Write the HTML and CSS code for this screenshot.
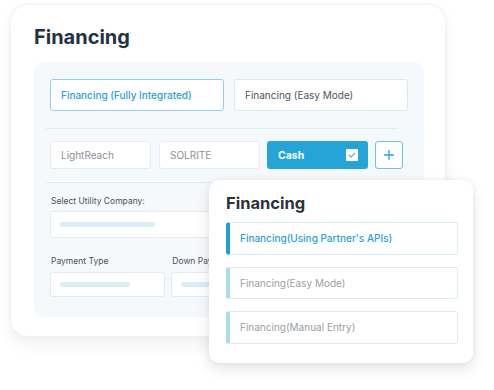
FILE: index.html
```html
<!DOCTYPE html>
<html>
<head>
<meta charset="utf-8">
<link rel="stylesheet" href="styles.css">
</head>
<body>
<div class="stage">
  <div class="card">
    <h1 class="title">Financing</h1>
    <div class="panel">
      <div class="row-modes">
        <div class="mode mode-active">Financing (Fully Integrated)</div>
        <div class="mode">Financing (Easy Mode)</div>
      </div>
      <div class="divider"></div>
      <div class="row-lenders">
        <div class="lender">LightReach</div>
        <div class="lender">SOLRITE</div>
        <div class="cash">
          <span>Cash</span>
          <span class="check">
            <svg width="12" height="12" viewBox="0 0 12 12"><path d="M3.2 6.2 L5.1 8 L8.8 4.2" fill="none" stroke="#5bb8e0" stroke-width="1.2" stroke-linecap="round" stroke-linejoin="round"/></svg>
          </span>
        </div>
        <div class="plus">
          <svg width="12" height="12" viewBox="0 0 12 12"><path d="M6 1.5 V10.5 M1.5 6 H10.5" stroke="#27a3d8" stroke-width="1.3" stroke-linecap="round"/></svg>
        </div>
      </div>
      <div class="divider divider-2"></div>
      <div class="label">Select Utility Company:</div>
      <div class="field field-wide"><span class="pill pill-long"></span></div>
      <div class="grid3">
        <div class="col">
          <div class="label label-low">Payment Type</div>
          <div class="field field-short"><span class="pill pill-mid"></span></div>
        </div>
        <div class="col">
          <div class="label label-low">Down Payment</div>
          <div class="field field-short"><span class="pill pill-mid"></span></div>
        </div>
        <div class="col">
          <div class="label label-low">Term</div>
          <div class="field field-short"><span class="pill pill-mid"></span></div>
        </div>
      </div>
    </div>
  </div>
  <div class="popup">
    <div class="popup-title">Financing</div>
    <div class="options">
      <div class="option option-active">Financing(Using Partner's APIs)</div>
      <div class="option">Financing(Easy Mode)</div>
      <div class="option">Financing(Manual Entry)</div>
    </div>
  </div>
</div>
</body>
</html>
```

FILE: styles.css
```css
* { box-sizing: border-box; }
html, body { margin: 0; padding: 0; background: #ffffff; }
body { font-family: Inter, "Noto Sans", sans-serif; width: 494px; height: 390px; overflow: hidden; }

.stage { position: relative; width: 494px; height: 390px; padding: 4px 0 0 10px; }

.card {
  width: 436px;
  height: 333px;
  background: #ffffff;
  border-radius: 18px;
  border: 1px solid #f1f3f5;
  box-shadow: 0 8px 14px rgba(40, 50, 60, 0.07), 0 0 4px rgba(40, 50, 60, 0.03);
  padding: 20px 21px 0 23px;
}

.title {
  margin: 0 0 13px 0;
  font-size: 20px;
  line-height: 24px;
  font-weight: 700;
  color: #1f3344;
}

.panel {
  background: #f6f9fc;
  border-radius: 9px;
  height: 255px;
  padding: 17px 16px 0 16px;
}

.row-modes { display: flex; gap: 10px; }
.mode {
  width: 174px;
  height: 32px;
  border: 1px solid #d5ebf3;
  border-radius: 3px;
  background: #ffffff;
  display: flex;
  align-items: center;
  padding-left: 10px;
  font-size: 10px;
  color: #4e555c;
}
.mode-active {
  border-color: #8fd2ec;
  color: #2aa2d8;
  font-weight: 500;
}

.divider { height: 1px; background: #dcecf3; margin: 17px 10px 12px -4px; }
.divider-2 { margin: 13px 10px 12px -4px; }

.row-lenders { display: flex; gap: 7px; align-items: flex-start; }
.lender {
  width: 101px;
  height: 28px;
  border: 1px solid #e8ebef;
  border-radius: 3px;
  background: #ffffff;
  display: flex;
  align-items: center;
  padding-left: 10px;
  font-size: 10px;
  color: #8b9097;
}
.lender + .lender { margin-left: 1px; }
.cash {
  width: 101px;
  height: 28px;
  border-radius: 3px;
  background: #23a5d8;
  display: flex;
  align-items: center;
  justify-content: space-between;
  padding: 0 10px 0 11px;
  font-size: 10.5px;
  font-weight: 700;
  color: #ffffff;
}
.check {
  width: 12px;
  height: 12px;
  background: #ffffff;
  border-radius: 1px;
  display: flex;
}
.plus {
  width: 28px;
  height: 28px;
  border: 1px solid #6cc2e6;
  border-radius: 3px;
  background: #ffffff;
  display: flex;
  align-items: center;
  justify-content: center;
}

.label {
  font-size: 8.5px;
  line-height: 12px;
  color: #4b5157;
  margin: 0 0 4px 1px;
}
.label-low { margin-bottom: 5px; }
.field {
  height: 27px;
  border: 1px solid #e6e9ee;
  border-radius: 3px;
  background: #ffffff;
  display: flex;
  align-items: center;
  padding-left: 9px;
}
.field-short { height: 25px; }
.pill { display: block; height: 5px; border-radius: 3px; background: #d8eff6; }
.pill-long { width: 95px; }
.pill-mid { width: 70px; }

.grid3 { display: grid; grid-template-columns: repeat(3, 1fr); gap: 6px; margin-top: 17px; }

.popup {
  position: absolute;
  left: 209px;
  top: 180px;
  width: 264px;
  height: 183px;
  background: #ffffff;
  border-radius: 10px;
  box-shadow: 0 6px 14px rgba(30, 40, 50, 0.12), 0 0 6px rgba(30, 40, 50, 0.05);
  padding: 13px 15px 0 17px;
}
.popup-title {
  font-size: 16.5px;
  line-height: 20px;
  font-weight: 700;
  color: #2a323b;
  margin-bottom: 9px;
}
.options { display: flex; flex-direction: column; gap: 12px; }
.option {
  height: 32.5px;
  border: 1px solid #d7edf5;
  border-left: 4px solid #a9dcf0;
  border-radius: 3px;
  display: flex;
  align-items: center;
  padding-left: 10px;
  font-size: 10px;
  color: #9a9ea3;
}
.option-active {
  border-left-color: #1f9fd6;
  color: #2aa2d8;
  font-weight: 500;
}
```
